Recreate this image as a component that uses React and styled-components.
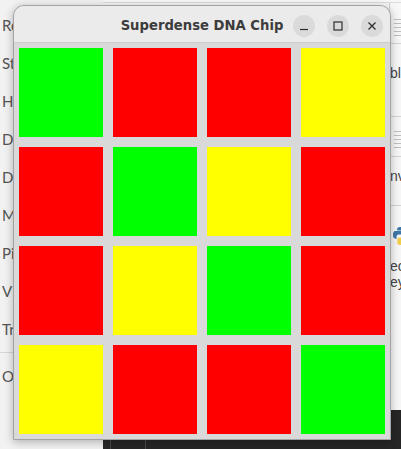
import React from "react";
import styled, { createGlobalStyle } from "styled-components";

const GlobalStyle = createGlobalStyle`
  html, body {
    margin: 0;
    padding: 0;
    background: #f6f6f6;
  }
  body {
    font-family: "DejaVu Sans", "Liberation Sans", sans-serif;
  }
`;

const Desktop = styled.div`
  position: relative;
  width: 401px;
  height: 449px;
  overflow: hidden;
  display: flex;
  background: #f7f7f7;
`;

const Sidebar = styled.div`
  width: 103px;
  flex-shrink: 0;
  display: flex;
  flex-direction: column;
  padding-top: 6px;
  background: #f2f2f2;
`;

const SideItem = styled.div`
  height: 38px;
  line-height: 38px;
  padding-left: 2px;
  font-family: Lato, sans-serif;
  font-size: 15px;
  color: #555;
  white-space: nowrap;
`;

const SideDivider = styled.div`
  height: 1px;
  background: #d6d6d6;
  margin: 4px 0 4px;
`;

const Main = styled.div`
  flex: 1;
  display: flex;
  flex-direction: column;
`;

const Upper = styled.div`
  flex: 1;
  display: flex;
  justify-content: flex-end;
  border-top: 1px solid #dcdcdc;
  margin-top: 2px;
`;

const RightPane = styled.div`
  width: 11px;
  overflow: hidden;
  display: flex;
  flex-direction: column;
  border-left: 1px solid #cfcfcf;
  background: #f7f7f7;
`;

const Lines = styled.div`
  height: ${(p) => p.h}px;
  margin: ${(p) => p.m};
  background: repeating-linear-gradient(
    to bottom,
    #9a9a9a 0 1px,
    transparent 1px 4px
  );
  opacity: 0.6;
`;

const Rule = styled.div`
  height: 1px;
  background: #d4d4d4;
  margin: ${(p) => p.m};
`;

const PaneText = styled.div`
  font-family: "Liberation Sans", sans-serif;
  font-size: 14px;
  line-height: ${(p) => p.lh || 16}px;
  color: #444;
  white-space: nowrap;
  margin: ${(p) => p.m || "0"};
`;

const BottomBar = styled.div`
  height: 39px;
  background: #262626;
  display: flex;
  align-items: flex-end;
  padding-left: 7px;
`;

const BarButton = styled.div`
  width: 34px;
  height: 26px;
  border: 1px solid #4a4a4a;
  border-bottom: none;
  border-radius: 6px 6px 0 0;
  margin-bottom: -12px;
`;

const Window = styled.div`
  position: absolute;
  left: 13px;
  top: 5px;
  width: 376px;
  border: 1px solid #a3a3a3;
  border-radius: 11px 11px 0 0;
  background: #d9d9d9;
  box-shadow: 0 2px 10px rgba(0, 0, 0, 0.28);
  display: flex;
  flex-direction: column;
`;

const TitleBar = styled.div`
  height: 37px;
  box-sizing: border-box;
  padding-top: 3px;
  border-radius: 10px 10px 0 0;
  background: #ebebeb;
  border-bottom: 1px solid #cdcdcd;
  display: grid;
  grid-template-columns: 1fr auto 1fr;
  align-items: center;
`;

const Title = styled.div`
  grid-column: 2;
  font-family: "DejaVu Sans", sans-serif;
  font-weight: bold;
  font-size: 13.2px;
  color: #3c3c3c;
`;

const Controls = styled.div`
  grid-column: 3;
  justify-self: end;
  display: flex;
  gap: 12px;
  padding-right: 7px;
`;

const CtrlButton = styled.div`
  width: 22px;
  height: 22px;
  border-radius: 50%;
  background: #dadada;
  display: flex;
  align-items: center;
  justify-content: center;
  color: #2e2e2e;
`;

const Grid = styled.div`
  display: grid;
  grid-template-columns: repeat(4, 84px);
  grid-auto-rows: 89px;
  gap: 10px;
  padding: 5px;
`;

const Cell = styled.div`
  background: ${(p) => p.color};
`;

const COLORS = { G: "#00ff00", R: "#ff0000", Y: "#ffff00" };
const chip = ["GRRY", "RGYR", "RYGR", "YRRG"];

const sideItems = ["Recent", "Starred", "Home", "Desktop", "Documents", "Music", "Pictures", "Videos", "Trash"];

const Python = () => (
  <svg width="20" height="20" viewBox="0 0 20 20" style={{ marginLeft: 1 }}>
    <path d="M9.8 1C6 1 6.2 2.7 6.2 2.7V4.5h3.7V5H4.6S2 4.7 2 8.8s2.3 3.9 2.3 3.9h1.3v-1.9s-.1-2.3 2.2-2.3h3.7s2.2 0 2.2-2.1V3.1S14 1 9.8 1z" fill="#3d77aa" />
    <path d="M10.2 19c3.8 0 3.6-1.7 3.6-1.7v-1.8h-3.7V15h5.3s2.6.3 2.6-3.8-2.3-3.9-2.3-3.9h-1.3v1.9s.1 2.3-2.2 2.3H8.5s-2.2 0-2.2 2.1v3.3S6 19 10.2 19z" fill="#f2cf4a" />
  </svg>
);

const App = () => {
  return (
    <>
      <GlobalStyle />
      <Desktop>
        <Sidebar>
          {sideItems.map((s) => (
            <SideItem key={s}>{s}</SideItem>
          ))}
          <SideDivider />
          <SideItem>Other Locations</SideItem>
        </Sidebar>
        <Main>
          <Upper>
            <RightPane>
              <Lines h={17} m="16px 0 0 4px" />
              <Rule m="7px 0 0" />
              <PaneText lh={18} m="20px 0 0">blocks</PaneText>
              <Rule m="34px 0 0" />
              <Lines h={17} m="14px 0 0 4px" />
              <Rule m="8px 0 0" />
              <PaneText lh={18} m="10px 0 0">nvidia</PaneText>
              <Rule m="20px 0 0" />
              <div style={{ marginTop: 20 }}>
                <Python />
              </div>
              <PaneText m="8px 0 0">ecosystem</PaneText>
              <PaneText>eyes</PaneText>
            </RightPane>
          </Upper>
          <BottomBar>
            <BarButton />
          </BottomBar>
        </Main>
        <Window>
          <TitleBar>
            <Title>Superdense DNA Chip</Title>
            <Controls>
              <CtrlButton>
                <svg width="10" height="10" viewBox="0 0 10 10">
                  <path d="M1 8.5h8" stroke="currentColor" strokeWidth="1.2" />
                </svg>
              </CtrlButton>
              <CtrlButton>
                <svg width="10" height="10" viewBox="0 0 10 10">
                  <rect x="1" y="1" width="8" height="8" fill="none" stroke="currentColor" strokeWidth="1.2" />
                </svg>
              </CtrlButton>
              <CtrlButton>
                <svg width="10" height="10" viewBox="0 0 10 10">
                  <path d="M1.5 1.5l7 7M8.5 1.5l-7 7" stroke="currentColor" strokeWidth="1.3" />
                </svg>
              </CtrlButton>
            </Controls>
          </TitleBar>
          <Grid>
            {chip.join("").split("").map((c, i) => (
              <Cell key={i} color={COLORS[c]} />
            ))}
          </Grid>
        </Window>
      </Desktop>
    </>
  );
};

export default App;
